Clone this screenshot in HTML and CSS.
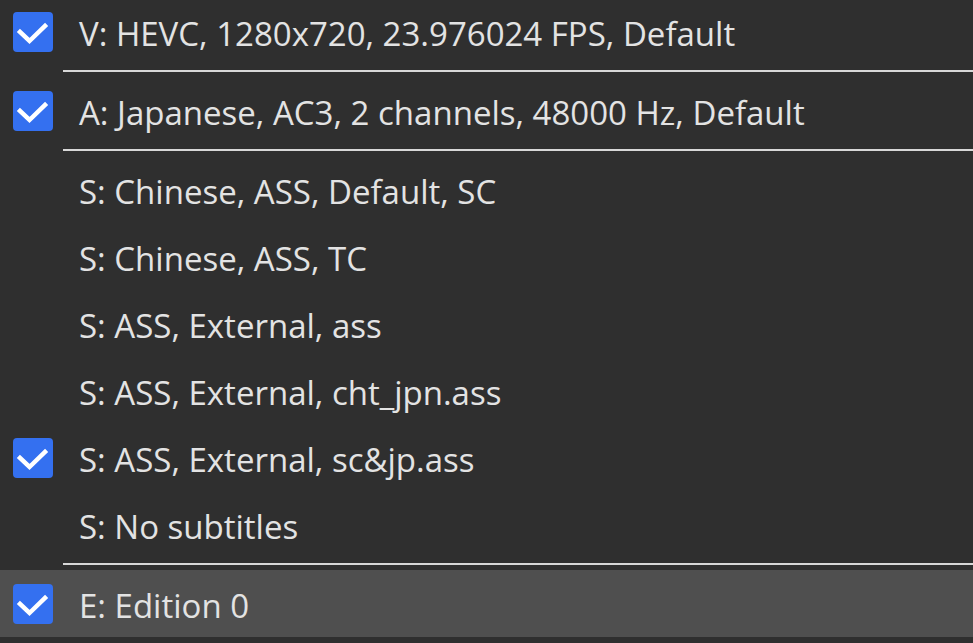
FILE: index.html
```html
<!DOCTYPE html>
<html>
<head>
<meta charset="utf-8">
<link rel="stylesheet" href="styles.css">
</head>
<body>
<div class="menu">
  <div class="item"><span class="check"><svg viewBox="0 0 40 40"><polyline points="7,20 16.5,29 32,14"/></svg></span><span class="label">V: HEVC, 1280x720, 23.976024 FPS, Default</span></div>
  <div class="sep"></div>
  <div class="item"><span class="check"><svg viewBox="0 0 40 40"><polyline points="7,20 16.5,29 32,14"/></svg></span><span class="label">A: Japanese, AC3, 2 channels, 48000 Hz, Default</span></div>
  <div class="sep"></div>
  <div class="item"><span class="nocheck"></span><span class="label">S: Chinese, ASS, Default, SC</span></div>
  <div class="item"><span class="nocheck"></span><span class="label">S: Chinese, ASS, TC</span></div>
  <div class="item"><span class="nocheck"></span><span class="label">S: ASS, External, ass</span></div>
  <div class="item"><span class="nocheck"></span><span class="label">S: ASS, External, cht_jpn.ass</span></div>
  <div class="item"><span class="check"><svg viewBox="0 0 40 40"><polyline points="7,20 16.5,29 32,14"/></svg></span><span class="label">S: ASS, External, sc&amp;jp.ass</span></div>
  <div class="item"><span class="nocheck"></span><span class="label">S: No subtitles</span></div>
  <div class="sep"></div>
  <div class="item hover"><span class="check"><svg viewBox="0 0 40 40"><polyline points="7,20 16.5,29 32,14"/></svg></span><span class="label">E: Edition 0</span></div>
</div>
</body>
</html>
```
FILE: styles.css
```css
html, body {
  margin: 0;
  padding: 0;
  background: #2f2f2f;
  overflow: hidden;
}
body {
  width: 973px;
  height: 643px;
  font-family: "Open Sans", "Noto Sans", sans-serif;
  color: #e3e3e3;
}
.menu {
  margin-top: -2px;
  display: flex;
  flex-direction: column;
}
.item {
  height: 67px;
  display: flex;
  align-items: center;
  padding-left: 13px;
}
.item.hover {
  background: #4f4f4f;
}
.check, .nocheck {
  width: 40px;
  height: 40px;
  flex: none;
  border-radius: 4px;
  margin-right: 26px;
}
.check {
  background: #3470f0;
  display: flex;
}
.check svg {
  width: 40px;
  height: 40px;
}
.check polyline {
  fill: none;
  stroke: #ffffff;
  stroke-width: 4.5;
  stroke-linecap: square;
  stroke-linejoin: miter;
}
.label {
  font-size: 33px;
  line-height: 1;
  white-space: nowrap;
  padding-top: 4px;
}
.sep {
  height: 2px;
  margin: 5px 0 5px 63px;
  background: #d8d8d8;
}
```
